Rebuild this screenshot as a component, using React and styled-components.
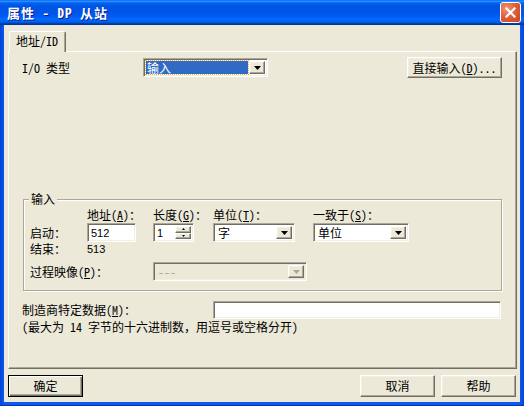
import React from 'react';
import styled, { createGlobalStyle, css } from 'styled-components';

const colors = {
  face: '#ece9d8',
  light: '#f1efe2',
  shadow: '#aca899',
  dark: '#716f64',
  select: '#316ac5',
  disabled: '#aca899',
};

const GlobalStyle = createGlobalStyle`
  html, body {
    margin: 0;
    padding: 0;
    background: #fff;
  }
  body {
    font-family: "Noto Sans Mono CJK SC", "Noto Sans CJK SC", "Liberation Sans", sans-serif;
    font-size: 12px;
    line-height: 14px;
    color: #000;
  }
  * {
    box-sizing: border-box;
  }
`;

const raised = css`
  border: 1px solid;
  border-color: #fff ${colors.dark} ${colors.dark} #fff;
  box-shadow: inset -1px -1px 0 ${colors.shadow}, inset 1px 1px 0 ${colors.light};
`;

const sunken = css`
  border: 1px solid;
  border-color: ${colors.shadow} #fff #fff ${colors.shadow};
  box-shadow: inset 1px 1px 0 ${colors.dark}, inset -1px -1px 0 ${colors.light};
`;

const Window = styled.div`
  width: 524px;
  height: 406px;
  display: flex;
  flex-direction: column;
`;

const TitleBar = styled.div`
  height: 25px;
  flex: none;
  display: flex;
  align-items: center;
  justify-content: space-between;
  padding: 0 3px 0 7px;
  background: linear-gradient(
    to bottom,
    #0058ee 0%,
    #3593ff 4%,
    #288eff 6%,
    #127dff 8%,
    #036ffc 10%,
    #0262ee 14%,
    #0057e5 20%,
    #0054e3 24%,
    #0055eb 56%,
    #005bf5 66%,
    #026afe 76%,
    #0062ef 86%,
    #0052d6 92%,
    #0040ab 94%,
    #003092 100%
  );
`;

const Title = styled.span`
  color: #fff;
  font-size: 13px;
  font-weight: bold;
  letter-spacing: 1px;
  text-shadow: 1px 1px 0 #0a1e8c;
  white-space: pre;
`;

const CloseButton = styled.div`
  width: 21px;
  height: 21px;
  display: flex;
  align-items: center;
  justify-content: center;
  border: 1px solid #fff;
  border-radius: 3px;
  background: radial-gradient(circle at 30% 30%, #ef9677 0%, #e0603c 45%, #c9421c 100%);
`;

const Frame = styled.div`
  flex: 1;
  display: flex;
  padding: 0 4px 3px;
  background: linear-gradient(to right, #0842d6 0, #0a5af0 4px, #0a5af0 calc(100% - 4px), #0842d6 100%);
  border-bottom: 1px solid #0831b0;
`;

const Body = styled.div`
  flex: 1;
  display: flex;
  flex-direction: column;
  padding: 6px 3px 5px 4px;
  background: ${colors.face};
`;

const TabStrip = styled.div`
  height: 20px;
  flex: none;
  display: flex;
  align-items: flex-end;
  padding-left: 1px;
`;

const Tab = styled.div`
  position: relative;
  z-index: 1;
  height: 21px;
  margin-bottom: -1px;
  padding: 2px 7px 0 6px;
  background: ${colors.face};
  border: 1px solid;
  border-color: #fff ${colors.dark} transparent #fff;
  border-bottom: none;
  border-radius: 2px 2px 0 0;
  box-shadow: inset -1px 0 0 ${colors.shadow};
`;

const Panel = styled.div`
  flex: 1;
  display: flex;
  flex-direction: column;
  padding: 5px 14px 0 13px;
  ${raised};
  box-shadow: inset -1px -1px 0 ${colors.shadow};
`;

const TypeRow = styled.div`
  height: 21px;
  display: grid;
  grid-template-columns: 121px 125px 1fr 95px;
  align-items: center;
  white-space: pre;
`;

const Key = styled.span`
  text-decoration: underline;
`;

const Button = styled.div`
  width: ${p => p.$width || 75}px;
  height: ${p => p.$height || 22}px;
  display: flex;
  align-items: center;
  justify-content: center;
  background: ${colors.face};
  white-space: pre;
  ${raised};
  ${p => p.$default && css`
    border-color: #000;
    box-shadow: inset 1px 1px 0 #fff, inset -1px -1px 0 ${colors.dark}, inset -2px -2px 0 ${colors.shadow};
  `}
`;

const Combo = styled.div`
  width: ${p => p.$width}px;
  height: 19px;
  display: flex;
  padding: 2px;
  background: ${p => (p.$disabled ? colors.face : '#fff')};
  ${sunken};
`;

const ComboField = styled.div`
  flex: 1;
  display: flex;
  align-items: center;
  padding-left: 2px;
  color: ${p => (p.$disabled ? colors.disabled : '#000')};
  ${p => p.$focused && css`
    margin: 0 1px 0 0;
    padding-left: 1px;
    background: ${colors.select};
    color: #fff;
    outline: 1px dotted #e8b04a;
  `}
`;

const DropButton = styled.div`
  width: 16px;
  flex: none;
  display: flex;
  align-items: center;
  justify-content: center;
  background: ${colors.face};
  ${raised};
`;

const TextBox = styled.div`
  width: ${p => (p.$width ? `${p.$width}px` : 'auto')};
  height: ${p => p.$height || 19}px;
  display: flex;
  align-items: center;
  padding-left: 3px;
  background: #fff;
  font-family: "Liberation Sans", sans-serif;
  font-size: 11px;
  ${sunken};
`;

const SpinBox = styled.div`
  width: 41px;
  height: 19px;
  display: flex;
  padding: 2px;
  background: #fff;
  ${sunken};
`;

const SpinText = styled.div`
  flex: 1;
  display: flex;
  align-items: center;
  padding-left: 1px;
  font-family: "Liberation Sans", sans-serif;
  font-size: 11px;
`;

const SpinButtons = styled.div`
  width: 16px;
  display: flex;
  flex-direction: column;
`;

const SpinHalf = styled.div`
  flex: 1;
  display: flex;
  align-items: center;
  justify-content: center;
  background: ${colors.face};
  ${raised};
`;

const GroupBox = styled.div`
  position: relative;
  margin: 121px 0 0 1px;
  padding: 8px 6px 9px;
  border: 1px solid ${colors.shadow};
  box-shadow: inset 1px 1px 0 #fff, 1px 1px 0 #fff;
`;

const Legend = styled.span`
  position: absolute;
  top: -8px;
  left: 5px;
  padding: 0 2px;
  background: ${colors.face};
`;

const GroupRow = styled.div`
  height: ${p => p.$height}px;
  margin-top: ${p => p.$gap || 0}px;
  display: grid;
  grid-template-columns: 57px 66px 60px 100px 1fr;
  align-items: center;
  white-space: pre;
`;

const Span = styled.div`
  grid-column: ${p => p.$cols};
`;

const Number = styled.span`
  font-family: "Liberation Sans", sans-serif;
  font-size: 11px;
`;

const DataRow = styled.div`
  margin-top: 10px;
  display: grid;
  grid-template-columns: 191px 1fr;
  align-items: center;
  white-space: pre;
`;

const Note = styled.div`
  margin-top: 1px;
  white-space: pre;
`;

const ButtonRow = styled.div`
  margin-top: 6px;
  padding-right: 1px;
  display: flex;
  gap: 6px;
`;

const Spacer = styled.div`
  flex: 1;
`;

const Arrow = ({ color = '#000' }) => (
  <svg width="7" height="4" viewBox="0 0 7 4">
    <polygon points="0,0 7,0 3.5,4" fill={color} />
  </svg>
);

const TinyArrow = ({ up }) => (
  <svg width="3" height="2" viewBox="0 0 3 2">
    <polygon points={up ? '1.5,0 3,2 0,2' : '0,0 3,0 1.5,2'} fill="#000" />
  </svg>
);

const Dropdown = ({ width, children, focused, disabled }) => (
  <Combo $width={width} $disabled={disabled}>
    <ComboField $focused={focused} $disabled={disabled}>{children}</ComboField>
    <DropButton>
      <Arrow color={disabled ? colors.disabled : '#000'} />
    </DropButton>
  </Combo>
);

const App = () => (
  <>
    <GlobalStyle />
    <Window>
      <TitleBar>
        <Title>属性 - DP 从站</Title>
        <CloseButton>
          <svg width="11" height="11" viewBox="0 0 11 11">
            <path d="M1.5 1.5 L9.5 9.5 M9.5 1.5 L1.5 9.5" stroke="#fff" strokeWidth="2.2" strokeLinecap="square" />
          </svg>
        </CloseButton>
      </TitleBar>
      <Frame>
        <Body>
          <TabStrip>
            <Tab>地址/ID</Tab>
          </TabStrip>
          <Panel>
            <TypeRow>
              <span>I/O 类型</span>
              <Dropdown width={125} focused>输入</Dropdown>
              <span />
              <Button $width={95} $height={21}>
                直接输入(<Key>D</Key>)...
              </Button>
            </TypeRow>

            <GroupBox>
              <Legend>输入</Legend>
              <GroupRow $height={14}>
                <span />
                <span>地址(<Key>A</Key>)：</span>
                <span>长度(<Key>G</Key>)：</span>
                <span>单位(<Key>T</Key>)：</span>
                <span>一致于(<Key>S</Key>)：</span>
              </GroupRow>
              <GroupRow $height={19} $gap={1}>
                <span>启动：</span>
                <TextBox $width={49}>512</TextBox>
                <SpinBox>
                  <SpinText>1</SpinText>
                  <SpinButtons>
                    <SpinHalf><TinyArrow up /></SpinHalf>
                    <SpinHalf><TinyArrow /></SpinHalf>
                  </SpinButtons>
                </SpinBox>
                <Dropdown width={82}>字</Dropdown>
                <Dropdown width={96}>单位</Dropdown>
              </GroupRow>
              <GroupRow $height={14}>
                <span>结束：</span>
                <Number>513</Number>
              </GroupRow>
              <GroupRow $height={19} $gap={6}>
                <Span $cols="1 / 3">过程映像(<Key>P</Key>)：</Span>
                <Span $cols="3 / 5">
                  <Dropdown width={154} disabled>---</Dropdown>
                </Span>
              </GroupRow>
            </GroupBox>

            <DataRow>
              <span>制造商特定数据(<Key>M</Key>)：</span>
              <TextBox $height={18} style={{ marginRight: 1 }} />
            </DataRow>
            <Note>(最大为 14 字节的十六进制数，用逗号或空格分开)</Note>
          </Panel>
          <ButtonRow>
            <Button $default>确定</Button>
            <Spacer />
            <Button>取消</Button>
            <Button>帮助</Button>
          </ButtonRow>
        </Body>
      </Frame>
    </Window>
  </>
);

export default App;
